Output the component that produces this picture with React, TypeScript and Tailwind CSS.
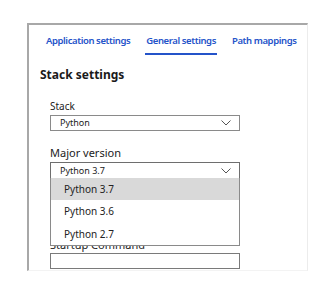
import React from "react";

function Chevron() {
  return (
    <svg width="10" height="6" viewBox="0 0 10 6" className="shrink-0">
      <path d="M0.5 0.5 L5 5 L9.5 0.5" fill="none" stroke="#555" strokeWidth="1" />
    </svg>
  );
}

export default function App() {
  const font = { fontFamily: '"Noto Sans", "Open Sans", sans-serif' };
  return (
    <div className="w-[327px] h-[300px] bg-white pt-[23px] pl-[27px]" style={font}>
      <div className="w-[281px] h-[248px] border-t-2 border-l-2 border-[#a8a8a8] border-r border-r-[#ececec] border-b border-b-[#f3f3f3] flex flex-col">
        <div className="flex pl-[17px] pt-[10px] gap-[15px] text-[9.5px] font-semibold text-[#2453c9] leading-[12px] whitespace-nowrap tracking-[-0.4px]">
          <div className="pb-[7px]">Application settings</div>
          <div className="pb-[6px] border-b-2 border-[#2453c9] px-[1px]">General settings</div>
          <div>Path mappings</div>
        </div>
        <div className="pl-[11px] mt-[12px] text-[12px] font-bold text-[#1a1a1a] leading-[16px]">Stack settings</div>
        <div className="pl-[21px] mt-[17px] flex flex-col w-[211px]">
          <div className="text-[10px] text-[#222] leading-[12px]">Stack</div>
          <div className="mt-[3px] h-[16px] border border-[#8a8a8a] flex items-center justify-between pl-[9px] pr-[8px] text-[9px] text-[#222]">
            <span>Python</span>
            <Chevron />
          </div>
          <div className="mt-[15px] text-[11px] text-[#222] leading-[14px]">Major version</div>
          <div className="relative mt-[2px]">
            <div className="h-[17px] border border-[#6e6e6e] flex items-center justify-between pl-[9px] pr-[8px] text-[9px] text-[#222]">
              <span>Python 3.7</span>
              <Chevron />
            </div>
            <div className="absolute left-0 right-0 top-[16px] bg-white border border-[#8a8a8a] border-t-0 flex flex-col text-[10px] text-[#222] z-10">
              <div className="h-[22px] bg-[#d9d9d9] flex items-center pl-[13px]">Python 3.7</div>
              <div className="h-[23px] flex items-center pl-[13px]">Python 3.6</div>
              <div className="h-[22px] flex items-center pl-[13px]">Python 2.7</div>
            </div>
          </div>
          <div className="mt-[59px] text-[11px] text-[#222] leading-[14px]">Startup Command</div>
          <div className="mt-[1px] h-[16px] border border-[#7a7a7a]"></div>
        </div>
      </div>
    </div>
  );
}
